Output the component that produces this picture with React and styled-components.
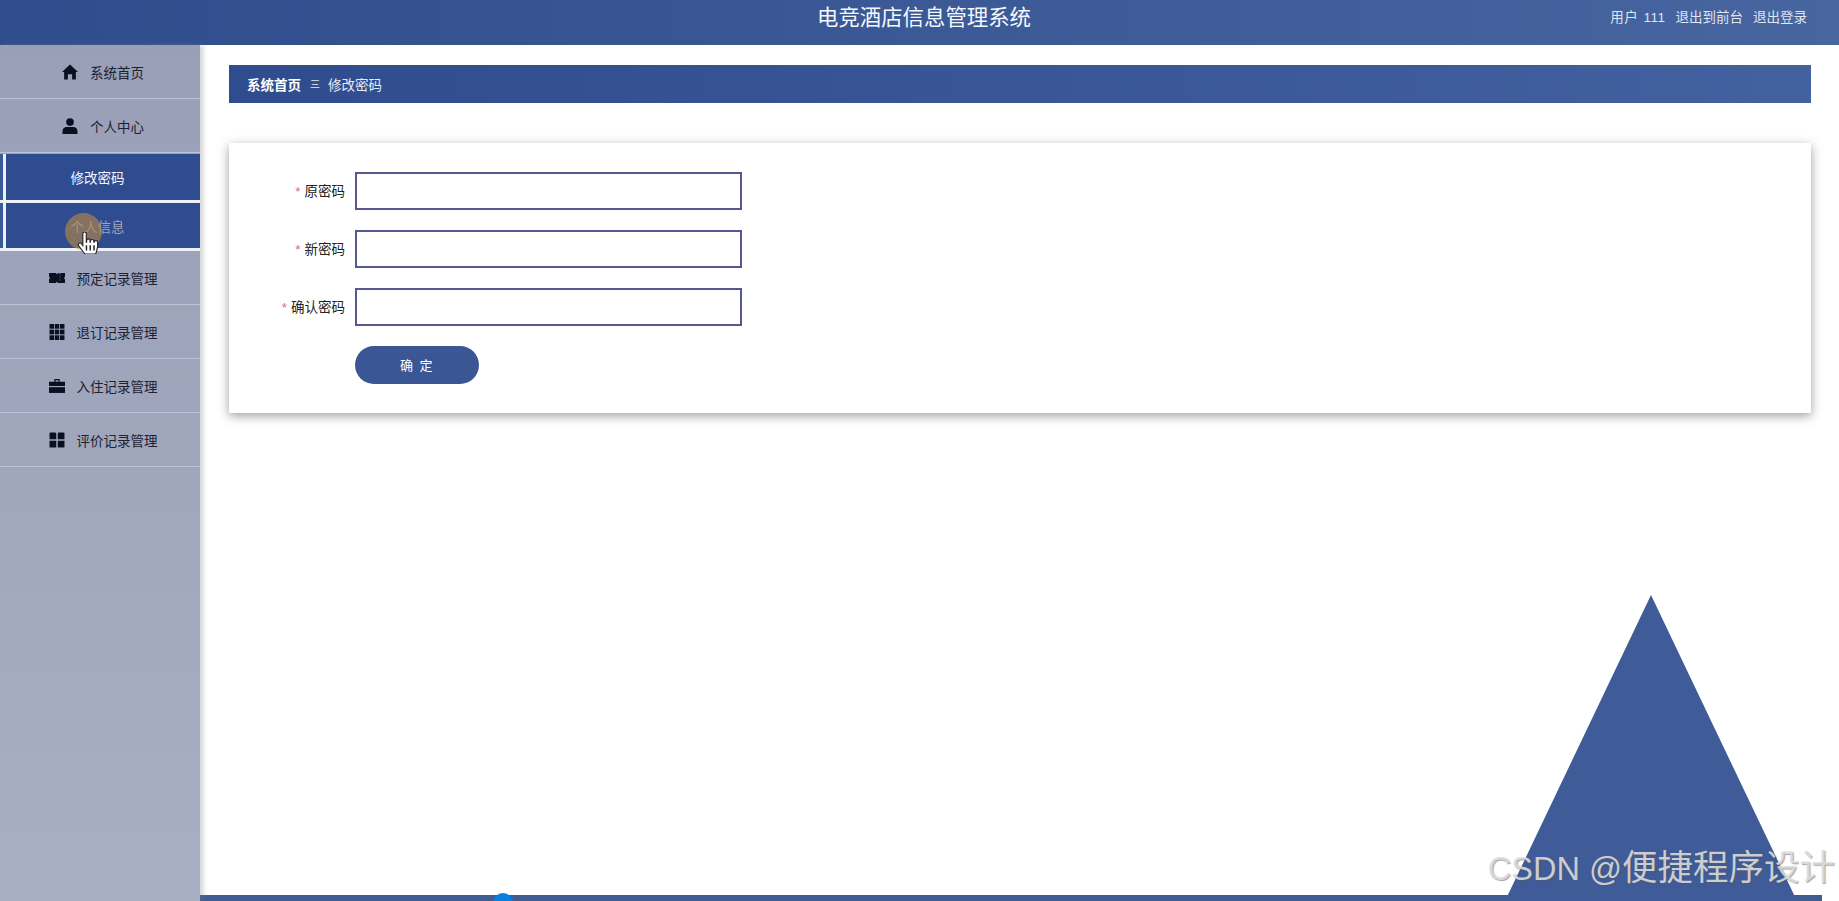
import React from "react";
import styled, { createGlobalStyle } from "styled-components";
import { FaHandPointer } from "react-icons/fa";

const Global = createGlobalStyle`
  html, body { margin: 0; padding: 0; background: #fff; }
  body { font-family: "Liberation Sans", "Noto Sans CJK SC", sans-serif; overflow: hidden; }
  * { box-sizing: border-box; }
`;

const Page = styled.div`
  position: relative;
  width: 1839px;
  height: 901px;
  overflow: hidden;
  display: flex;
  flex-direction: column;
`;

const Header = styled.header`
  height: 45px;
  flex: none;
  display: grid;
  grid-template-columns: 1fr auto 1fr;
  align-items: center;
  padding: 0 32px 0 41px;
  color: #fff;
  background: linear-gradient(90deg, #2f4d8c 0%, #47659f 100%);
`;

const Title = styled.h1`
  grid-column: 2;
  margin: 0 0 9px;
  font-size: 21.4px;
  line-height: 26px;
  font-weight: 400;
  color: #f4f8fd;
`;

const HeaderLinks = styled.div`
  grid-column: 3;
  justify-self: end;
  display: flex;
  gap: 10px;
  margin-bottom: 14px;
  font-size: 13.5px;
  color: #dfe5f2;
`;

const UserName = styled.span`
  word-spacing: 1px;
  letter-spacing: 0.5px;
`;

const Body = styled.div`
  flex: 1;
  display: flex;
  min-height: 0;
`;

const Sidebar = styled.nav`
  width: 200px;
  flex: none;
  background: linear-gradient(180deg, #989fb7 0%, #a8afc3 100%);
  box-shadow: 3px 0 5px rgba(120, 125, 130, 0.35);
  position: relative;
`;

const MenuItem = styled.div`
  height: 54px;
  display: flex;
  align-items: center;
  justify-content: center;
  gap: 12px;
  padding-left: 6px;
  font-size: 13.5px;
  color: #1c2233;
  border-bottom: 1px solid #bcc3d6;
  svg { width: 16px; height: 16px; fill: #0b1020; flex: none; }
`;

const SubMenu = styled.div`
  display: flex;
  flex-direction: column;
  margin-top: 1px;
`;

const SubItem = styled.div`
  height: ${(p) => (p.$last ? "48px" : "49px")};
  border-bottom: 3px solid #eef3f9;
  display: flex;
  align-items: center;
  justify-content: center;
  padding-left: 6px;
  padding-right: 11px;
  font-size: 13.5px;
  color: ${(p) => (p.$muted ? "#a0a6b8" : "#f2f5fc")};
  background: linear-gradient(90deg, #3a5a9a 3px, #e8f4fa 3px, #e8f4fa 6px, #2f4c91 6px);
`;

const Main = styled.main`
  flex: 1;
  min-width: 0;
  display: flex;
  flex-direction: column;
  padding-top: 20px;
`;

const Content = styled.div`
  flex: 1;
  padding: 0 28px 0 29px;
`;

const Breadcrumb = styled.div`
  height: 38px;
  display: flex;
  align-items: center;
  padding-left: 18px;
  padding-bottom: 1px;
  font-size: 13.5px;
  color: #e6ebf6;
  background: linear-gradient(90deg, #2f4c8e 0%, #42619f 100%);
`;

const CrumbStrong = styled.span`
  font-weight: 700;
  color: #fff;
`;

const CrumbSeparator = styled.span`
  font-size: 10px;
  margin: 0 8px 0 9px;
`;

const Card = styled.section`
  margin-top: 40px;
  height: 270px;
  padding: 29px 0 0 0;
  background: #fff;
  box-shadow: 0 3px 10px rgba(0, 0, 0, 0.38);
  display: flex;
  flex-direction: column;
  gap: 20px;
`;

const Row = styled.div`
  height: 38px;
  display: flex;
  align-items: center;
  gap: 10px;
`;

const Label = styled.label`
  width: 116px;
  text-align: right;
  font-size: 13.5px;
  color: #222;
  padding-bottom: 2px;
`;

const Star = styled.span`
  color: #d9688a;
  margin-right: 4px;
`;

const Input = styled.input`
  width: 387px;
  height: 38px;
  border: 2px solid #55598f;
  background: #fff;
  outline: none;
`;

const Submit = styled.button`
  margin-left: 126px;
  width: 124px;
  height: 38px;
  border: none;
  border-radius: 19px;
  padding: 0 0 2px;
  background: #3a5695;
  color: #fff;
  font-family: inherit;
  font-size: 13px;
  letter-spacing: 1.5px;
`;

const Footer = styled.footer`
  height: 6px;
  flex: none;
  margin-right: 17px;
  background: #3f5c93;
`;

const Triangle = styled.div`
  position: absolute;
  right: 42px;
  bottom: 0;
  width: 292px;
  height: 306px;
  background: #3f5b98;
  clip-path: polygon(50% 0, 100% 100%, 0 100%);
`;

const Dot = styled.div`
  position: absolute;
  left: 493px;
  top: 893px;
  width: 20px;
  height: 20px;
  border-radius: 50%;
  background: #0a7fe2;
`;

const CursorHalo = styled.div`
  position: absolute;
  left: 65px;
  top: 213px;
  width: 37px;
  height: 37px;
  border-radius: 50%;
  background: rgba(185, 135, 70, 0.62);
`;

const Cursor = styled.div`
  position: absolute;
  left: 77px;
  top: 232px;
  line-height: 0;
  font-size: 22px;
  svg { color: #fff; stroke: #222; stroke-width: 26px; }
`;

const Watermark = styled.div`
  position: absolute;
  right: 4px;
  top: 848px;
  font-size: 35.5px;
  line-height: 40px;
  white-space: nowrap;
  color: rgba(222, 222, 222, 0.88);
  text-shadow: 1px 1px 1px rgba(90, 90, 90, 0.55);
`;

const WatermarkLatin = styled.span`
  font-size: 32.5px;
`;

const HomeIcon = () => (
  <svg viewBox="0 0 15 15">
    <path d="M7.5 0.5 15 7.5H13V14.5H9.5V9.5H5.5V14.5H2V7.5H0Z" />
  </svg>
);
const UserIcon = () => (
  <svg viewBox="0 0 15 15">
    <circle cx="7.5" cy="3.8" r="3.6" />
    <path d="M0.5 15V12.2C0.5 9.8 2.4 8.4 4.4 8.4H10.6C12.6 8.4 14.5 9.8 14.5 12.2V15Z" />
  </svg>
);
const TicketIcon = () => (
  <svg viewBox="0 0 16 15">
    <path fillRule="evenodd" d="M0 2.5H7L8 4 9 2.5H16V6L15 7.5 16 9V12.5H9L8 11 7 12.5H0V9L1 7.5 0 6Z M10.6 2.5V4H11.4V2.5Z M10.6 6V7H11.4V6Z M10.6 9V10H11.4V9Z" />
  </svg>
);
const GridIcon = () => (
  <svg viewBox="0 0 15 15">
    {[0, 5.3, 10.6].flatMap((y) =>
      [0.5, 5.4, 10.3].map((x) => <rect key={`${x}-${y}`} x={x} y={y} width="4.2" height="4.4" />)
    )}
  </svg>
);
const CaseIcon = () => (
  <svg viewBox="0 0 15 15">
    <path fillRule="evenodd" d="M5 1H10V3.5H15V7.6H0V3.5H5Z M6.2 2.2V3.5H8.8V2.2Z" />
    <path d="M0 8.6H15V14H0Z" />
  </svg>
);
const TilesIcon = () => (
  <svg viewBox="0 0 15 15">
    <path d="M1.5 0.5H5.5Q6.8 0.5 6.8 1.8V6.8H0.5V1.5Q0.5 0.5 1.5 0.5Z" />
    <path d="M9.5 0.5H13.5Q14.5 0.5 14.5 1.5V6.8H8.2V1.8Q8.2 0.5 9.5 0.5Z" />
    <rect x="0.5" y="8.2" width="6.3" height="6.3" />
    <rect x="8.2" y="8.2" width="6.3" height="6.3" />
  </svg>
);

const menuTop = [
  { icon: <HomeIcon />, text: "系统首页" },
  { icon: <UserIcon />, text: "个人中心" },
];
const menuBottom = [
  { icon: <TicketIcon />, text: "预定记录管理" },
  { icon: <GridIcon />, text: "退订记录管理" },
  { icon: <CaseIcon />, text: "入住记录管理" },
  { icon: <TilesIcon />, text: "评价记录管理" },
];
const fields = ["原密码", "新密码", "确认密码"];

export default function App() {
  return (
    <Page>
      <Global />
      <Header>
        <Title>电竞酒店信息管理系统</Title>
        <HeaderLinks>
          <UserName>用户 111</UserName>
          <span>退出到前台</span>
          <span>退出登录</span>
        </HeaderLinks>
      </Header>
      <Body>
        <Sidebar>
          {menuTop.map((m) => (
            <MenuItem key={m.text}>{m.icon}<span>{m.text}</span></MenuItem>
          ))}
          <SubMenu>
            <SubItem>修改密码</SubItem>
            <SubItem $muted $last>个人信息</SubItem>
          </SubMenu>
          {menuBottom.map((m) => (
            <MenuItem key={m.text}>{m.icon}<span>{m.text}</span></MenuItem>
          ))}
        </Sidebar>
        <Main>
          <Content>
            <Breadcrumb>
              <CrumbStrong>系统首页</CrumbStrong>
              <CrumbSeparator>三</CrumbSeparator>
              <span>修改密码</span>
            </Breadcrumb>
            <Card>
              {fields.map((f) => (
                <Row key={f}>
                  <Label><Star>*</Star>{f}</Label>
                  <Input />
                </Row>
              ))}
              <Row>
                <Submit>确 定</Submit>
              </Row>
            </Card>
          </Content>
          <Footer />
        </Main>
      </Body>
      <Triangle />
      <Dot />
      <CursorHalo />
      <Cursor><FaHandPointer /></Cursor>
      <Watermark><WatermarkLatin>CSDN @</WatermarkLatin>便捷程序设计</Watermark>
    </Page>
  );
}
